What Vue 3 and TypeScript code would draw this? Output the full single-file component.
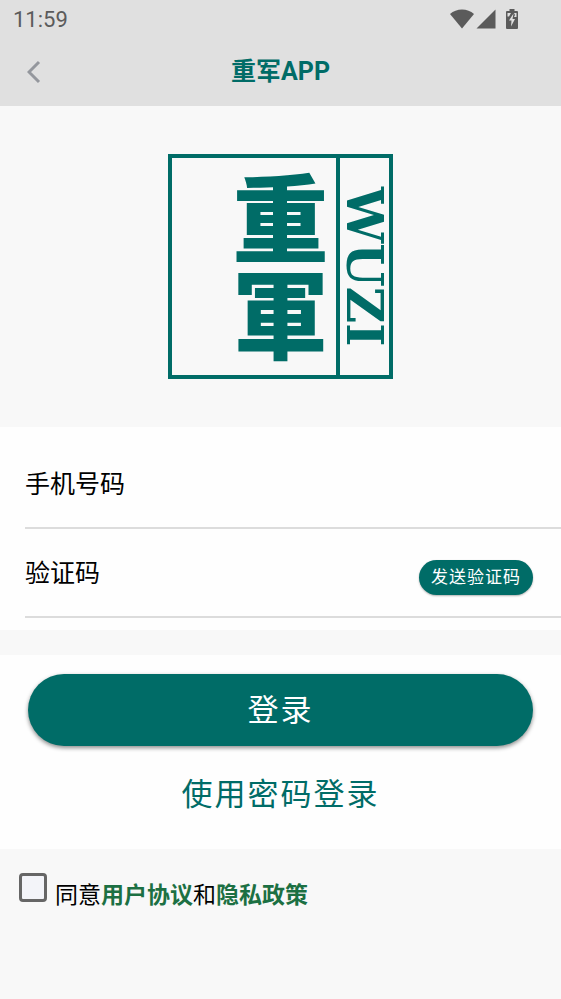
<script setup lang="ts">
import { ref } from 'vue'

const phone = ref('')
const code = ref('')
const agreed = ref(false)
</script>

<template>
  <div class="page">
    <header class="header">
      <div class="status">
        <span class="time">11:59</span>
        <div class="indicators">
          <svg width="24" height="20" viewBox="0 0 24 20" aria-hidden="true">
            <path d="M0 5Q5 0.5 12 0.5T24 5L12 19.5Z" />
          </svg>
          <svg width="20" height="20" viewBox="0 0 20 20" aria-hidden="true">
            <path d="M19.5 0.5V19.5H0.5Z" />
          </svg>
          <svg class="battery" width="14" height="20" viewBox="0 0 14 20" aria-hidden="true">
            <path d="M4.5 0H9.5V2H12Q13 2 13 3V19Q13 20 12 20H2Q1 20 1 19V3Q1 2 2 2H4.5Z" />
            <path class="cutout" d="M2.5 4H6L4 7.5H2.5ZM9 4H11.5V8H9L10 6ZM8.5 4.5L4 11.5H6.5L6 17.5L10 10H7.5Z" />
          </svg>
        </div>
      </div>
      <div class="nav">
        <button class="back" type="button" aria-label="返回">
          <svg width="14" height="24" viewBox="0 0 14 24" aria-hidden="true">
            <path d="M12 2L2 12L12 22" />
          </svg>
        </button>
        <h1 class="title">重军APP</h1>
      </div>
    </header>

    <main>
      <section class="brand">
        <div class="logo">
          <div class="logo-name">重軍</div>
          <div class="logo-latin">WUZI</div>
        </div>
      </section>

      <form @submit.prevent>
        <section class="fields">
          <div class="row">
            <label for="phone">手机号码</label>
            <input id="phone" v-model="phone" type="tel" />
          </div>
          <div class="row">
            <label for="code">验证码</label>
            <input id="code" v-model="code" type="text" inputmode="numeric" />
            <button class="send" type="button">发送验证码</button>
          </div>
        </section>

        <section class="actions">
          <button class="login" type="submit">登录</button>
          <button class="switch" type="button">使用密码登录</button>
        </section>

        <section class="agreement">
          <input id="agree" v-model="agreed" type="checkbox" />
          <p class="terms">
            <label for="agree">同意</label><a href="#terms">用户协议</a>和<a href="#privacy">隐私政策</a>
          </p>
        </section>
      </form>
    </main>
  </div>
</template>

<style>
body {
  margin: 0;
  background: #f8f8f8;
}
</style>

<style scoped>
.page {
  color: #000;
  font-family: Roboto, "Noto Sans CJK SC", sans-serif;
}

button,
input {
  font-family: inherit;
}

button {
  border: 0;
  padding: 0;
  background: none;
}

.header {
  background: #e0e0e0;
  color: #5b5b5b;
}

.status {
  display: flex;
  align-items: center;
  justify-content: space-between;
  height: 38px;
  padding: 0 42px 0 13px;
}

.time {
  font-size: 22px;
  line-height: 38px;
  padding-top: 2px;
}

.indicators {
  display: flex;
  gap: 2px;
  fill: #5b5b5b;
}

.battery {
  margin-left: 7px;
}

.cutout {
  fill: #e0e0e0;
}

.nav {
  display: grid;
  grid-template-columns: 68px 1fr 68px;
  align-items: center;
  height: 68px;
}

.back {
  display: flex;
  align-items: center;
  justify-content: center;
  height: 68px;
}

.back svg {
  fill: none;
  stroke: #94979d;
  stroke-width: 3;
}

.title {
  margin: 0;
  color: #006c67;
  font-size: 25px;
  font-weight: 700;
  line-height: 68px;
  text-align: center;
}

.brand {
  display: flex;
  justify-content: center;
  padding: 48px 0;
}

.logo {
  display: flex;
  box-sizing: border-box;
  width: 225px;
  height: 225px;
  border: 4px solid #006c67;
  color: #006c67;
}

.logo-name {
  flex: 1;
  display: flex;
  align-items: center;
  justify-content: center;
  box-sizing: border-box;
  padding-left: 52px;
  border-right: 4px solid #006c67;
  font-family: "Noto Sans CJK TC", sans-serif;
  font-size: 96px;
  font-weight: 900;
  line-height: 96px;
  writing-mode: vertical-rl;
}

.logo-latin {
  width: 49px;
  font-family: "DejaVu Serif", serif;
  font-size: 50px;
  font-weight: 700;
  line-height: 49px;
  text-align: center;
  writing-mode: vertical-rl;
}

.fields {
  padding: 13px 0 12px 25px;
  background: #fefefe;
}

.row {
  display: flex;
  align-items: center;
  box-sizing: border-box;
  height: 89px;
  padding-right: 28px;
  border-bottom: 2px solid #dcdcdc;
}

.row label {
  flex: none;
  padding-top: 2px;
  font-size: 25px;
  line-height: 36px;
}

.row input {
  flex: 1;
  min-width: 0;
  height: 48px;
  margin: 0 12px;
  padding: 0;
  border: 0;
  outline: 0;
  background: transparent;
  font-size: 25px;
}

.send {
  width: 114px;
  height: 35px;
  margin-top: 10px;
  padding-bottom: 4px;
  border-radius: 18px;
  background: #006c67;
  box-shadow: 0 1px 2px rgba(0, 0, 0, 0.3);
  color: #fff;
  font-size: 17px;
  letter-spacing: 1px;
}

.actions {
  display: flex;
  flex-direction: column;
  gap: 12px;
  margin-top: 25px;
  padding: 19px 28px;
  background: #fefefe;
}

.login,
.switch {
  height: 72px;
  padding-bottom: 6px;
  border-radius: 36px;
  font-size: 31px;
  letter-spacing: 2px;
}

.login {
  background: #006c67;
  box-shadow: 0 2px 4px rgba(0, 0, 0, 0.45);
  color: #fff;
}

.switch {
  color: #006c67;
}

.agreement {
  display: flex;
  align-items: flex-start;
  gap: 8px;
  padding: 24px 19px;
}

.agreement input {
  appearance: none;
  flex: none;
  width: 28px;
  height: 29px;
  margin: 0;
  border: 3px solid #666;
  border-radius: 4px;
  background: #f3f4f9;
}

.agreement input:checked {
  background: #006c67;
}

.terms {
  margin: 6px 0;
  font-size: 23px;
  line-height: 34px;
}

.terms a {
  color: #1c7043;
  font-weight: 700;
  text-decoration: none;
}
</style>
